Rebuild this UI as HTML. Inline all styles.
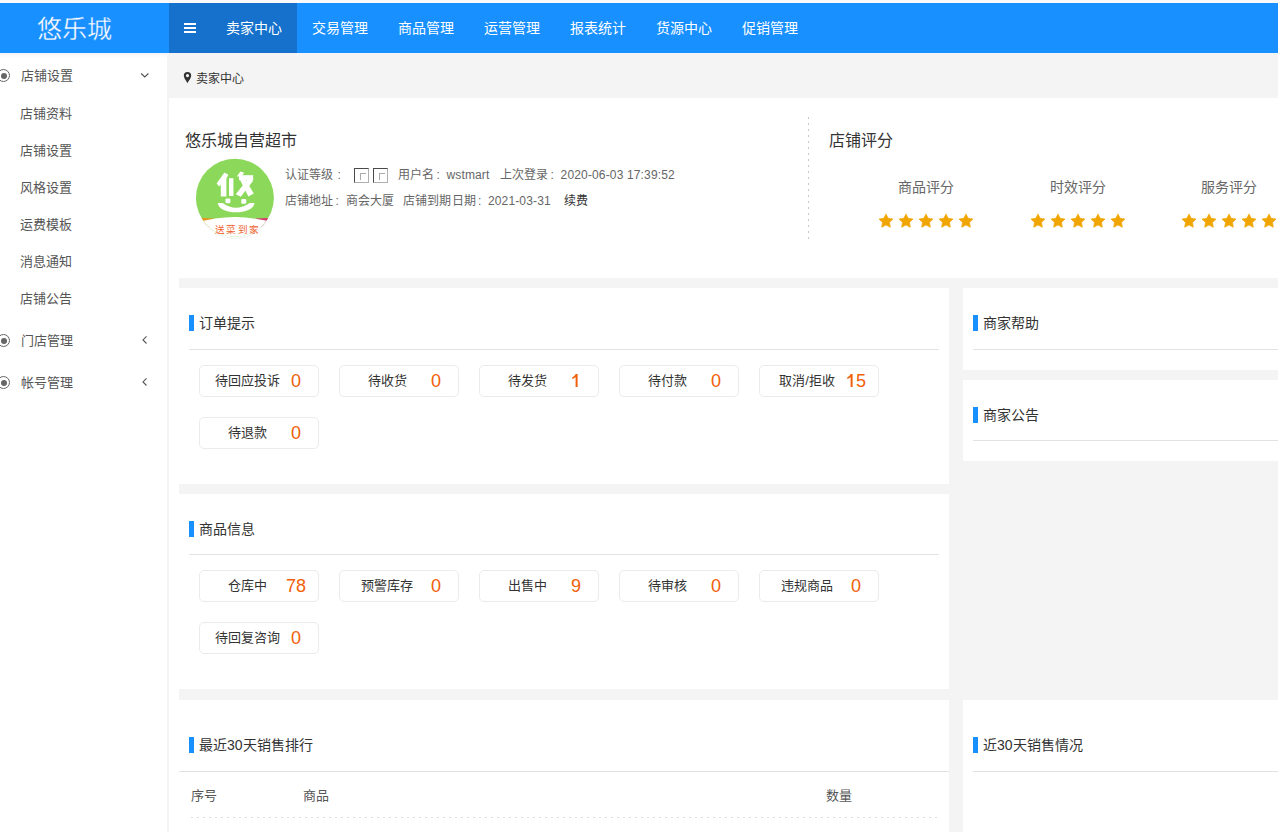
<!DOCTYPE html>
<html lang="zh-CN"><head><meta charset="utf-8">
<style>
*{margin:0;padding:0;box-sizing:border-box}
html,body{width:1278px;height:832px;overflow:hidden;background:#fff;font-family:"Liberation Sans",sans-serif;color:#333}
.abs{position:absolute;white-space:nowrap}
#topstrip{left:0;top:0;width:1278px;height:3px;background:#fafafa}
#header{left:0;top:3px;width:1278px;height:50px;background:#1890ff}
#logo{left:0;top:4px;width:148px;height:50px;color:#fff;font-size:25px;line-height:50px;text-align:center;-webkit-text-stroke:0.35px #1890ff}
#burger{left:169px;top:3px;width:42px;height:50px;background:#1571cb}
#burger i{position:absolute;left:15px;width:12px;height:2px;background:#fff}
.nav{top:3px;height:50px;width:86px;line-height:50px;text-align:center;color:#fff;font-size:14px}
.nav.on{background:#1571cb}
#sidebar{left:0;top:53px;width:167px;height:779px;background:#fff}
#shadow{left:0;top:53px;width:167px;height:5px;background:linear-gradient(#f4f4f4,#fff)}
#sideline{left:167px;top:53px;width:2px;height:779px;background:#f4f4f4}
.mi{left:21px;font-size:13px;color:#555;line-height:16px}
.si{left:20px;font-size:13px;color:#555;line-height:16px}
.radio{left:-3px;width:13px;height:13px;border:1px solid #666;border-radius:50%}
.radio:after{content:"";position:absolute;left:2.5px;top:2.5px;width:6px;height:6px;border-radius:50%;background:#666}
#crumb{left:169px;top:53px;width:1109px;height:45px;background:#f4f4f4}
#main{left:169px;top:98px;width:1109px;height:734px;background:#fff}
.grey{background:#f4f4f4}
.white{background:#fff}
.ptitle{font-size:14px;color:#333;line-height:16px}
.bar{width:5px;height:16px;background:#1890ff}
.hr{height:1px;background:#e2e2e2}
.tile{width:120px;height:32px;border:1px solid #ebebeb;border-radius:5px;background:#fff}
.tile .l{position:absolute;left:0;top:0;width:94px;text-align:center;font-size:13px;line-height:30px;color:#333}
.tile .n{position:absolute;left:79px;top:0;width:34px;text-align:center;font-size:18px;line-height:30px;color:#f0600a}
.info{font-size:12px;line-height:14px;color:#666;letter-spacing:0.15px}
.c{display:inline-block;width:12px;padding-left:2px}
.bimg{width:15px;height:15px;border-style:solid;border-width:1px;border-color:#4a4a4a #b0b0b0 #b0b0b0 #4a4a4a}
.bimg:after{content:"";position:absolute;left:5px;top:4px;width:5px;height:6px;border-left:1px solid #aaa;border-top:1px solid #aaa}
.stars{top:213px;width:100px;height:16px;overflow:visible}
</style></head><body>
<div class="abs" id="topstrip"></div>
<div class="abs" id="header"></div>
<div class="abs" id="logo">悠乐城</div>
<div class="abs" id="burger"><i style="top:20px"></i><i style="top:24px"></i><i style="top:28px"></i></div>
<div class="abs nav on" style="left:211px">卖家中心</div>
<div class="abs nav" style="left:297px">交易管理</div>
<div class="abs nav" style="left:383px">商品管理</div>
<div class="abs nav" style="left:469px">运营管理</div>
<div class="abs nav" style="left:555px">报表统计</div>
<div class="abs nav" style="left:641px">货源中心</div>
<div class="abs nav" style="left:727px">促销管理</div>

<div class="abs" id="sidebar"></div>
<div class="abs" id="shadow"></div>
<div class="abs" id="sideline"></div>
<div class="abs radio" style="top:69px"></div>
<div class="abs mi" style="top:68px">店铺设置</div>
<svg class="abs" style="left:140px;top:72px" width="10" height="7" viewBox="0 0 10 7"><path d="M1.2 1.5 L4.8 5 L8.4 1.5" fill="none" stroke="#555" stroke-width="1.1"/></svg>
<div class="abs si" style="top:106px">店铺资料</div>
<div class="abs si" style="top:143px">店铺设置</div>
<div class="abs si" style="top:180px">风格设置</div>
<div class="abs si" style="top:217px">运费模板</div>
<div class="abs si" style="top:254px">消息通知</div>
<div class="abs si" style="top:291px">店铺公告</div>
<div class="abs radio" style="top:334px"></div>
<div class="abs mi" style="top:333px">门店管理</div>
<svg class="abs" style="left:141px;top:335px" width="7" height="10" viewBox="0 0 7 10"><path d="M5.5 1.3 L2 4.9 L5.5 8.5" fill="none" stroke="#555" stroke-width="1.1"/></svg>
<div class="abs radio" style="top:376px"></div>
<div class="abs mi" style="top:375px">帐号管理</div>
<svg class="abs" style="left:141px;top:377px" width="7" height="10" viewBox="0 0 7 10"><path d="M5.5 1.3 L2 4.9 L5.5 8.5" fill="none" stroke="#555" stroke-width="1.1"/></svg>

<div class="abs" id="crumb"></div>
<div class="abs" id="main"></div>
<svg class="abs" style="left:183px;top:71px" width="9" height="13" viewBox="0 0 9 13"><path d="M4.4 12.2 C3.2 9.8 0.8 7.6 0.8 4.6 A3.7 3.7 0 0 1 8.2 4.6 C8.2 7.6 5.7 9.8 4.4 12.2 Z M4.5 3 A1.6 1.6 0 1 0 4.5 6.2 A1.6 1.6 0 1 0 4.5 3 Z" fill="#333" fill-rule="evenodd"/></svg>
<div class="abs" style="left:196px;top:72px;font-size:12px;line-height:14px;color:#333">卖家中心</div>

<!-- grey gutters -->
<div class="abs grey" style="left:179px;top:278px;width:1099px;height:554px"></div>
<div class="abs white" style="left:179px;top:288px;width:770px;height:196px"></div>
<div class="abs white" style="left:179px;top:494px;width:770px;height:195px"></div>
<div class="abs white" style="left:179px;top:700px;width:770px;height:132px"></div>
<div class="abs white" style="left:963px;top:288px;width:315px;height:82px"></div>
<div class="abs white" style="left:963px;top:380px;width:315px;height:81px"></div>
<div class="abs white" style="left:963px;top:700px;width:315px;height:132px"></div>

<!-- panel headers -->
<div class="abs bar" style="left:189px;top:315px"></div><div class="abs ptitle" style="left:199px;top:315px">订单提示</div>
<div class="abs hr" style="left:189px;top:349px;width:750px"></div>
<div class="abs bar" style="left:189px;top:521px"></div><div class="abs ptitle" style="left:199px;top:521px">商品信息</div>
<div class="abs hr" style="left:189px;top:554px;width:750px"></div>
<div class="abs bar" style="left:189px;top:737px"></div><div class="abs ptitle" style="left:199px;top:737px">最近30天销售排行</div>
<div class="abs hr" style="left:179px;top:771px;width:770px"></div>
<div class="abs bar" style="left:973px;top:315px"></div><div class="abs ptitle" style="left:983px;top:315px">商家帮助</div>
<div class="abs hr" style="left:973px;top:349px;width:305px"></div>
<div class="abs bar" style="left:973px;top:407px"></div><div class="abs ptitle" style="left:983px;top:407px">商家公告</div>
<div class="abs hr" style="left:973px;top:440px;width:305px"></div>
<div class="abs bar" style="left:973px;top:737px"></div><div class="abs ptitle" style="left:983px;top:737px">近30天销售情况</div>
<div class="abs hr" style="left:973px;top:771px;width:305px"></div>

<!-- order tiles -->
<div class="abs tile" style="left:199px;top:365px"><span class="l">待回应投诉</span><span class="n">0</span></div>
<div class="abs tile" style="left:339px;top:365px"><span class="l">待收货</span><span class="n">0</span></div>
<div class="abs tile" style="left:479px;top:365px"><span class="l">待发货</span><span class="n"><svg width="10" height="13" viewBox="0 0 10 13" style="vertical-align:baseline"><path d="M4.7 0 L6.6 0 L6.6 13 L4.6 13 L4.6 3 Q3.3 4.3 1.3 5.1 L1.3 3.3 Q3.7 2.2 4.7 0 Z" fill="#f0600a"/></svg></span></div>
<div class="abs tile" style="left:619px;top:365px"><span class="l">待付款</span><span class="n">0</span></div>
<div class="abs tile" style="left:759px;top:365px"><span class="l">取消/拒收</span><span class="n"><svg width="10" height="13" viewBox="0 0 10 13" style="vertical-align:baseline"><path d="M4.7 0 L6.6 0 L6.6 13 L4.6 13 L4.6 3 Q3.3 4.3 1.3 5.1 L1.3 3.3 Q3.7 2.2 4.7 0 Z" fill="#f0600a"/></svg>5</span></div>
<div class="abs tile" style="left:199px;top:417px"><span class="l">待退款</span><span class="n">0</span></div>
<!-- goods tiles -->
<div class="abs tile" style="left:199px;top:570px"><span class="l">仓库中</span><span class="n">78</span></div>
<div class="abs tile" style="left:339px;top:570px"><span class="l">预警库存</span><span class="n">0</span></div>
<div class="abs tile" style="left:479px;top:570px"><span class="l">出售中</span><span class="n">9</span></div>
<div class="abs tile" style="left:619px;top:570px"><span class="l">待审核</span><span class="n">0</span></div>
<div class="abs tile" style="left:759px;top:570px"><span class="l">违规商品</span><span class="n">0</span></div>
<div class="abs tile" style="left:199px;top:622px"><span class="l">待回复咨询</span><span class="n">0</span></div>

<!-- table header -->
<div class="abs" style="left:191px;top:788px;font-size:13px;line-height:15px;color:#555">序号</div>
<div class="abs" style="left:303px;top:788px;font-size:13px;line-height:15px;color:#555">商品</div>
<div class="abs" style="left:826px;top:788px;font-size:13px;line-height:15px;color:#555">数量</div>
<svg class="abs" style="left:191px;top:817px" width="748" height="1"><line x1="0" y1="0.5" x2="748" y2="0.5" stroke="#dcdcdc" stroke-width="1" stroke-dasharray="2 4"/></svg>

<!-- shop info -->
<div class="abs" style="left:185px;top:132px;font-size:16px;line-height:18px;color:#333">悠乐城自营超市</div>
<svg class="abs" style="left:194px;top:157px" width="82" height="82" viewBox="0 0 82 82">
<defs><clipPath id="cc"><circle cx="40.9" cy="40.8" r="39"/></clipPath></defs>
<g clip-path="url(#cc)">
<rect x="0" y="0" width="82" height="82" fill="#8bd85a"/>
<path d="M0 60.8 L20 61.6 L20 70 L0 70 Z" fill="#e8921e"/>
<path d="M62 61.6 L82 60.6 L82 70 L62 70 Z" fill="#d63a6e"/>
<path d="M0 66.5 Q41 53.6 82 66.5 L82 82 L0 82 Z" fill="#fff"/>
</g>
<path d="M8.5 64 A39 39 0 0 0 73.3 64" fill="none" stroke="#ececec" stroke-width="0.8"/>
<path d="M22.6 26.4 L30.4 15.4 L34.4 17.8 L32.4 21.4 L32.4 39.4 L26.8 39.4 L26.8 27.6 L25.2 29.6 Z" fill="#fff"/>
<rect x="35" y="21.2" width="4.4" height="17.8" fill="#fff"/>
<path d="M42.8 19.6 L46.4 14.6 L50.2 15.8 L47.6 19.6 Z" fill="#fff"/>
<path d="M45 18.2 L59.2 18.2 L59.2 23.2 L45 23.2 Z" fill="#fff"/>
<path d="M45.8 22.5 L51.4 22.5 L59.8 36.4 L54.4 39.4 Z" fill="#fff"/>
<path d="M53.4 22.5 L59.4 23.6 L46.8 39.8 L41.8 37.2 Z" fill="#fff"/>
<rect x="31.4" y="41.4" width="5" height="4.9" rx="1.2" fill="#fff"/>
<rect x="47.3" y="41.9" width="5" height="4.9" rx="1.2" fill="#fff"/>
<path d="M23.7 46 L28.6 46 Q42 55.6 55.7 46 L60.6 46 C59.4 52.6 51.4 55.3 42 55.3 C32.6 55.3 24.8 52.6 23.7 46 Z" fill="#fff"/>
<text x="43.6" y="76.4" text-anchor="middle" font-family="Liberation Sans" font-size="9.6" fill="#f0622e" letter-spacing="1.2">送菜到家</text>
</svg>
<div class="abs info" style="left:285px;top:168px">认证等级<span class="c" style="padding-left:4px">:</span></div>
<div class="abs bimg" style="left:354px;top:168px"></div>
<div class="abs bimg" style="left:373px;top:168px"></div>
<div class="abs info" style="left:398px;top:168px">用户名<span class="c">:</span>wstmart</div>
<div class="abs info" style="left:500px;top:168px">上次登录<span class="c">:</span>2020-06-03 17:39:52</div>
<div class="abs info" style="left:285px;top:194px">店铺地址<span class="c">:</span>商会大厦</div>
<div class="abs info" style="left:403px;top:194px">店铺到期日期<span class="c">:</span>2021-03-31</div>
<div class="abs info" style="left:564px;top:194px;color:#333">续费</div>
<svg class="abs" style="left:808px;top:117px" width="1" height="122"><line x1="0.5" y1="0" x2="0.5" y2="122" stroke="#c8c8c8" stroke-width="1" stroke-dasharray="2 4"/></svg>
<div class="abs" style="left:829px;top:132px;font-size:16px;line-height:18px;color:#333">店铺评分</div>
<div class="abs" style="left:850px;top:179px;width:152px;text-align:center;font-size:14px;line-height:16px;color:#666">商品评分</div>
<div class="abs" style="left:1002px;top:179px;width:152px;text-align:center;font-size:14px;line-height:16px;color:#666">时效评分</div>
<div class="abs" style="left:1153px;top:179px;width:152px;text-align:center;font-size:14px;line-height:16px;color:#666">服务评分</div>
<svg class="abs stars" style="left:879px"><path transform="translate(0 0)" d="M7.00 0.90 L9.17 5.31 L14.04 6.01 L10.52 9.44 L11.35 14.29 L7.00 12.00 L2.65 14.29 L3.48 9.44 L-0.04 6.01 L4.83 5.31 Z" fill="#f0a500" stroke="#f0a500" stroke-width="0.6" stroke-linejoin="round"/><path transform="translate(20 0)" d="M7.00 0.90 L9.17 5.31 L14.04 6.01 L10.52 9.44 L11.35 14.29 L7.00 12.00 L2.65 14.29 L3.48 9.44 L-0.04 6.01 L4.83 5.31 Z" fill="#f0a500" stroke="#f0a500" stroke-width="0.6" stroke-linejoin="round"/><path transform="translate(40 0)" d="M7.00 0.90 L9.17 5.31 L14.04 6.01 L10.52 9.44 L11.35 14.29 L7.00 12.00 L2.65 14.29 L3.48 9.44 L-0.04 6.01 L4.83 5.31 Z" fill="#f0a500" stroke="#f0a500" stroke-width="0.6" stroke-linejoin="round"/><path transform="translate(60 0)" d="M7.00 0.90 L9.17 5.31 L14.04 6.01 L10.52 9.44 L11.35 14.29 L7.00 12.00 L2.65 14.29 L3.48 9.44 L-0.04 6.01 L4.83 5.31 Z" fill="#f0a500" stroke="#f0a500" stroke-width="0.6" stroke-linejoin="round"/><path transform="translate(80 0)" d="M7.00 0.90 L9.17 5.31 L14.04 6.01 L10.52 9.44 L11.35 14.29 L7.00 12.00 L2.65 14.29 L3.48 9.44 L-0.04 6.01 L4.83 5.31 Z" fill="#f0a500" stroke="#f0a500" stroke-width="0.6" stroke-linejoin="round"/></svg>
<svg class="abs stars" style="left:1031px"><path transform="translate(0 0)" d="M7.00 0.90 L9.17 5.31 L14.04 6.01 L10.52 9.44 L11.35 14.29 L7.00 12.00 L2.65 14.29 L3.48 9.44 L-0.04 6.01 L4.83 5.31 Z" fill="#f0a500" stroke="#f0a500" stroke-width="0.6" stroke-linejoin="round"/><path transform="translate(20 0)" d="M7.00 0.90 L9.17 5.31 L14.04 6.01 L10.52 9.44 L11.35 14.29 L7.00 12.00 L2.65 14.29 L3.48 9.44 L-0.04 6.01 L4.83 5.31 Z" fill="#f0a500" stroke="#f0a500" stroke-width="0.6" stroke-linejoin="round"/><path transform="translate(40 0)" d="M7.00 0.90 L9.17 5.31 L14.04 6.01 L10.52 9.44 L11.35 14.29 L7.00 12.00 L2.65 14.29 L3.48 9.44 L-0.04 6.01 L4.83 5.31 Z" fill="#f0a500" stroke="#f0a500" stroke-width="0.6" stroke-linejoin="round"/><path transform="translate(60 0)" d="M7.00 0.90 L9.17 5.31 L14.04 6.01 L10.52 9.44 L11.35 14.29 L7.00 12.00 L2.65 14.29 L3.48 9.44 L-0.04 6.01 L4.83 5.31 Z" fill="#f0a500" stroke="#f0a500" stroke-width="0.6" stroke-linejoin="round"/><path transform="translate(80 0)" d="M7.00 0.90 L9.17 5.31 L14.04 6.01 L10.52 9.44 L11.35 14.29 L7.00 12.00 L2.65 14.29 L3.48 9.44 L-0.04 6.01 L4.83 5.31 Z" fill="#f0a500" stroke="#f0a500" stroke-width="0.6" stroke-linejoin="round"/></svg>
<svg class="abs stars" style="left:1182px"><path transform="translate(0 0)" d="M7.00 0.90 L9.17 5.31 L14.04 6.01 L10.52 9.44 L11.35 14.29 L7.00 12.00 L2.65 14.29 L3.48 9.44 L-0.04 6.01 L4.83 5.31 Z" fill="#f0a500" stroke="#f0a500" stroke-width="0.6" stroke-linejoin="round"/><path transform="translate(20 0)" d="M7.00 0.90 L9.17 5.31 L14.04 6.01 L10.52 9.44 L11.35 14.29 L7.00 12.00 L2.65 14.29 L3.48 9.44 L-0.04 6.01 L4.83 5.31 Z" fill="#f0a500" stroke="#f0a500" stroke-width="0.6" stroke-linejoin="round"/><path transform="translate(40 0)" d="M7.00 0.90 L9.17 5.31 L14.04 6.01 L10.52 9.44 L11.35 14.29 L7.00 12.00 L2.65 14.29 L3.48 9.44 L-0.04 6.01 L4.83 5.31 Z" fill="#f0a500" stroke="#f0a500" stroke-width="0.6" stroke-linejoin="round"/><path transform="translate(60 0)" d="M7.00 0.90 L9.17 5.31 L14.04 6.01 L10.52 9.44 L11.35 14.29 L7.00 12.00 L2.65 14.29 L3.48 9.44 L-0.04 6.01 L4.83 5.31 Z" fill="#f0a500" stroke="#f0a500" stroke-width="0.6" stroke-linejoin="round"/><path transform="translate(80 0)" d="M7.00 0.90 L9.17 5.31 L14.04 6.01 L10.52 9.44 L11.35 14.29 L7.00 12.00 L2.65 14.29 L3.48 9.44 L-0.04 6.01 L4.83 5.31 Z" fill="#f0a500" stroke="#f0a500" stroke-width="0.6" stroke-linejoin="round"/></svg>
</body></html>
